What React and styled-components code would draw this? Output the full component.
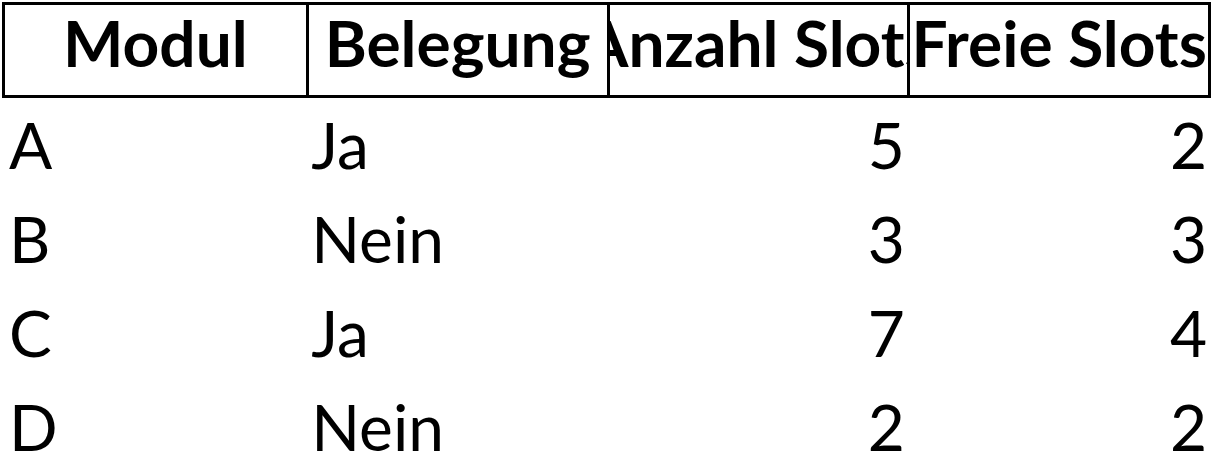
import React from 'react';
import styled, { createGlobalStyle } from 'styled-components';

const GlobalStyle = createGlobalStyle`
  body {
    margin: 0;
    background: #ffffff;
    font-family: Lato, "Liberation Sans", sans-serif;
    color: #000000;
  }
`;

const Table = styled.div`
  width: 1209px;
  margin: 2px 0 0 2px;
`;

const HeadRow = styled.div`
  display: grid;
  grid-template-columns: repeat(4, 1fr);
  border: 3px solid #000;
  height: 96px;
  box-sizing: border-box;
`;

const HeadCell = styled.div`
  border-left: ${(p) => (p.$first ? 'none' : '3px solid #000')};
  overflow: hidden;
  display: flex;
  justify-content: center;
  font-weight: 700;
  font-size: 64px;
  line-height: 1.2;
  white-space: nowrap;
`;

const Row = styled.div`
  display: grid;
  grid-template-columns: repeat(4, 1fr);
  height: 94px;
  align-items: center;
`;

const Cell = styled.div`
  font-size: 64px;
  line-height: 1.2;
  text-align: ${(p) => (p.$num ? 'right' : 'left')};
  padding: 0 4px 0 7px;
  white-space: nowrap;
`;

const rows = [
  ['A', 'Ja', 5, 2],
  ['B', 'Nein', 3, 3],
  ['C', 'Ja', 7, 4],
  ['D', 'Nein', 2, 2],
];

export default function App() {
  return (
    <>
      <GlobalStyle />
      <Table>
        <HeadRow>
          <HeadCell $first>Modul</HeadCell>
          <HeadCell>Belegung</HeadCell>
          <HeadCell>Anzahl Slots</HeadCell>
          <HeadCell>Freie Slots</HeadCell>
        </HeadRow>
        {rows.map((r) => (
          <Row key={r[0]}>
            <Cell>{r[0]}</Cell>
            <Cell>{r[1]}</Cell>
            <Cell $num>{r[2]}</Cell>
            <Cell $num>{r[3]}</Cell>
          </Row>
        ))}
      </Table>
    </>
  );
}
